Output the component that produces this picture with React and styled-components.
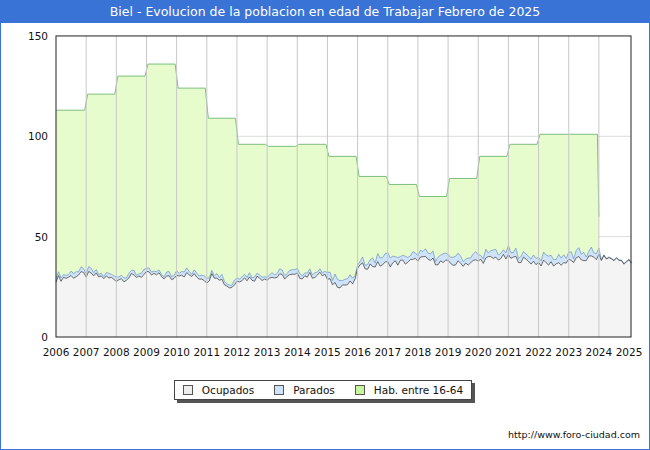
import React from "react";
import styled, { createGlobalStyle } from "styled-components";

const Global = createGlobalStyle`
  html,body{margin:0;padding:0;background:#fff;}
  body{font-family:"DejaVu Sans",sans-serif;}
`;
const Frame = styled.div`
  width:650px;height:450px;box-sizing:border-box;border:1px solid #3a73d6;border-top:none;
  display:flex;flex-direction:column;position:relative;overflow:hidden;
`;
const TitleBar = styled.div`
  height:23px;background:#3a73d6;color:#fff;font-size:12.5px;
  display:flex;align-items:center;justify-content:center;
`;
const Chart = styled.svg`display:block;`;
const LegendRow = styled.div`display:flex;justify-content:center;margin-top:15px;padding-right:4px;`;
const Legend = styled.div`
  display:flex;gap:20px;align-items:center;border:1px solid #444;padding:3px 8px 3px 8px;
  box-shadow:3px 3px 0 #555;font-size:10.5px;color:#111;
`;
const Item = styled.div`display:flex;align-items:center;gap:9px;`;
const Sw = styled.span`width:8px;height:8px;border:1px solid #555;background:${p=>p.c};display:inline-block;`;
const Footer = styled.div`position:absolute;right:9px;bottom:9px;font-size:9.5px;color:#111;`;

const X0=55, XW=30.16, Y0=337, YK=2.007;
const x=t=>X0+(t-2006)*XW, y=v=>Y0-v*YK;
const hab=[113,121,130,136,124,109,96,95,96,90,80,76,70,79,90,96,101,101];
function rnd(i){const s=Math.sin(i*12.9898)*43758.5453;return s-Math.floor(s);}
const occ=[],par=[];
for(let i=0;i<=229;i++){
  const t=2006+i/12;
  let base=30;
  if(t<2010)base=30+Math.sin(t*3)*1;
  else if(t<2011)base=32-(t-2010)*3;
  else if(t<2012)base=28+Math.sin((t-2011)*6)*3;
  else if(t<2015)base=29+ (t-2012)*0.7;
  else if(t<2016)base=28-Math.sin((t-2015)*3)*2;
  else if(t<2018)base=35+(t-2016)*1.5;
  else base=38+Math.sin(t*2)*1.5;
  const o=base+(rnd(i)-0.5)*3.5;
  occ.push([t,o]);
  const gap=t>=2024.05?0.3:(t<2015?1+rnd(i+500)*1.5:1.5+rnd(i+500)*3);
  par.push([t,o+gap]);
}
const line=a=>a.map((p,i)=>(i?"L":"M")+x(p[0]).toFixed(1)+","+y(p[1]).toFixed(1)).join(" ");
let hp=`M${x(2006)},${y(0)}`;
hab.forEach((v,i)=>{hp+=` L${x(2006+i)+(i?1.5:0)},${y(v)} L${x(2007+i)-1.5},${y(v)}`;});
hp+=` L${x(2024)},${y(60)}`;
const habLine=hp.replace(/^M[^L]*L/,"M");
hp+=` L${x(2024)},${y(0)} Z`;
const occArea=line(occ)+` L${x(occ[occ.length-1][0])},${y(0)} L${x(2006)},${y(0)} Z`;
const parArea=line(par)+" "+[...occ].reverse().map(p=>"L"+x(p[0]).toFixed(1)+","+y(p[1]).toFixed(1)).join(" ")+" Z";

export default function App(){
  const years=[];for(let i=2006;i<=2025;i++)years.push(i);
  return(<><Global/><Frame>
    <TitleBar>Biel - Evolucion de la poblacion en edad de Trabajar Febrero de 2025</TitleBar>
    <Chart width="648" height="342" viewBox="0 23 648 342">
      {[50,100].map(v=><line key={v} x1={X0} x2={630} y1={y(v)} y2={y(v)} stroke="#ddd"/>)}
      <path d={hp} fill="#e6fccc"/>
      <path d={habLine} fill="none" stroke="#7dbf7d" strokeWidth="1"/>
      <path d={parArea} fill="#cfe3fb"/>
      <path d={occArea} fill="#f4f4f4"/>
      <path d={line(par)} fill="none" stroke="#6a8fc8" strokeWidth="0.7"/>
      <path d={line(occ)} fill="none" stroke="#333" strokeWidth="0.7"/>
      {years.slice(1,19).map(t=><line key={t} x1={x(t)} x2={x(t)} y1={y(150)} y2={y(0)} stroke="#c8c8c8"/>)}
      <rect x={X0} y={y(150)} width={630-X0} height={150*YK} fill="none" stroke="#222"/>
      {[0,50,100,150].map(v=><text key={v} x={47} y={y(v)+4} fontSize="10.5" textAnchor="end" fontFamily="DejaVu Sans" fill="#111">{v}</text>)}
      {years.map(t=><text key={t} x={x(t)} y={356} fontSize="10.5" textAnchor="middle" fontFamily="DejaVu Sans" fill="#111">{t}</text>)}
    </Chart>
    <LegendRow><Legend>
      <Item><Sw c="#eee"/>Ocupados</Item>
      <Item><Sw c="#cfe3fb"/>Parados</Item>
      <Item><Sw c="#c6f59e"/>Hab. entre 16-64</Item>
    </Legend></LegendRow>
    <Footer>http://www.foro-ciudad.com</Footer>
  </Frame></>);
}
